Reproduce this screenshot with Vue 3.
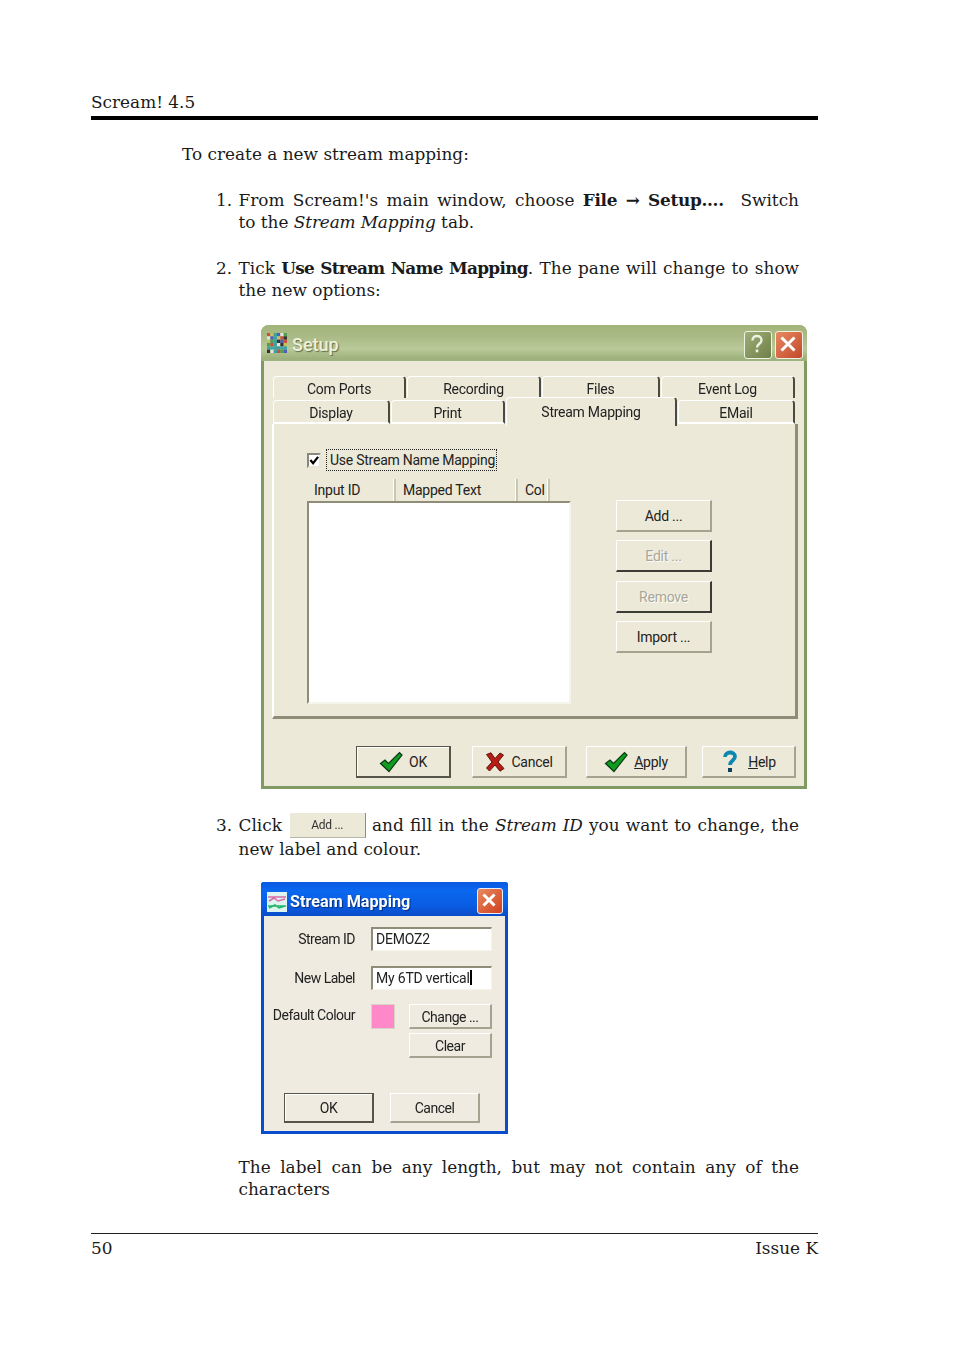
<script setup>
const row1 = [
  { label: 'Com Ports', w: 133 },
  { label: 'Recording', w: 134 },
  { label: 'Files', w: 118 },
  { label: 'Event Log', w: 134 }
]
const row2 = [
  { label: 'Display', w: 117 },
  { label: 'Print', w: 114 },
  { label: 'Stream Mapping', w: 171, active: true },
  { label: 'EMail', w: 117 }
]
const sideButtons = [
  { label: 'Add ...' },
  { label: 'Edit ...', off: true },
  { label: 'Remove', off: true },
  { label: 'Import ...' }
]
const cols = [
  { label: 'Input ID', w: 89 },
  { label: 'Mapped Text', w: 122 },
  { label: 'Col', w: 32 }
]
const mosaic = []
const palette = ['#c8503c', '#4f9e54', '#4c60b8', '#c8c060', '#333', '#e4e4dc', '#40a0a0']
for (let y = 0; y < 6; y++) for (let x = 0; x < 6; x++) mosaic.push({ x: x * 3, y: y * 3, c: palette[(x * 3 + y * 5 + x * y) % 7] })
</script>

<template>
  <div class="page">
    <header class="head">Scream! 4.5</header>
    <p class="intro">To create a new stream mapping:</p>

    <div class="item">
      <span class="num">1.</span>
      <div class="body">
        <span class="j">From Scream!'s main window, choose <b class="snug">File → Setup....</b> &nbsp;Switch</span>
        <span>to the <i>Stream Mapping</i> tab.</span>
      </div>
    </div>

    <div class="item">
      <span class="num">2.</span>
      <div class="body">
        <span class="j">Tick <b class="tight">Use Stream Name Mapping</b>. The pane will change to show</span>
        <span>the new options:</span>
      </div>
    </div>

    <section class="win">
      <div class="title">
        <svg class="appicon" width="20" height="20" viewBox="0 0 18 18">
          <rect v-for="(m, i) in mosaic" :key="i" :x="m.x" :y="m.y" width="3" height="3" :fill="m.c" />
        </svg>
        <span class="titletext">Setup</span>
        <span class="capbtn helpcap">
          <svg width="26" height="26" viewBox="0 0 26 26"><path d="M8.500 9.500c0-3 2-4.500 4.500-4.500s4.500 1.600 4.500 4.200c0 3.500-4.500 3.600-4.500 7.300" fill="none" stroke="#eef0e0" stroke-width="2.400"/><rect x="11.700" y="18.500" width="2.600" height="2.800" fill="#eef0e0"/></svg>
        </span>
        <span class="capbtn closecap">
          <svg width="26" height="26" viewBox="0 0 26 26"><path d="M6.500 6.500l13 13M19.500 6.500l-13 13" stroke="#fff" stroke-width="3" fill="none"/></svg>
        </span>
      </div>

      <div class="client">
        <div class="tabrow first">
          <div v-for="t in row1" :key="t.label" class="tab" :style="{ width: t.w + 'px' }">{{ t.label }}</div>
        </div>
        <div class="tabrow second">
          <div v-for="t in row2" :key="t.label" class="tab" :class="{ active: t.active }" :style="{ width: t.w + 'px' }">{{ t.label }}</div>
        </div>

        <div class="pane">
          <div class="checkrow">
            <span class="check">
              <svg width="11" height="11" viewBox="0 0 11 11"><path d="M1.500 5l3 3.500L10 1.500" fill="none" stroke="#000" stroke-width="2.400"/></svg>
            </span>
            <span class="focuslabel">Use Stream Name Mapping</span>
          </div>
          <div class="panecols">
            <div class="listwrap">
              <div class="listhead">
                <span v-for="c in cols" :key="c.label" class="lh" :style="{ width: c.w + 'px' }">{{ c.label }}</span>
              </div>
              <div class="list"></div>
            </div>
            <div class="sidebtns">
              <div v-for="b in sideButtons" :key="b.label" class="sidebtn" :class="{ off: b.off }">{{ b.label }}</div>
            </div>
          </div>
        </div>

        <div class="actions">
          <div class="act okb">
            <svg width="24" height="22" viewBox="0 0 24 22"><path d="M1.500 12.500l4.500-3.500 3.500 3.500L20.500 1.500l2.500 2.500L10 20.500z" fill="#0f9a20" stroke="#0a3a14" stroke-width="1.200"/></svg>
            <span>OK</span>
          </div>
          <div class="act cancelb">
            <svg width="20" height="20" viewBox="0 0 20 20"><path d="M1.500 2.500L6 .8l4 5.700 5-5.500 3.500 2-5.500 7 6 6.500-4 2.700-5-6.200-5.500 6-3-3 5.500-6z" fill="#b81c14" stroke="#5a1a14" stroke-width="1"/></svg>
            <span>Cancel</span>
          </div>
          <div class="act applyb">
            <svg width="24" height="22" viewBox="0 0 24 22"><path d="M1.500 12.500l4.500-3.500 3.500 3.500L20.500 1.500l2.500 2.500L10 20.500z" fill="#0f9a20" stroke="#0a3a14" stroke-width="1.200"/></svg>
            <span><u>A</u>pply</span>
          </div>
          <div class="act helpb">
            <svg width="18" height="24" viewBox="0 0 18 24"><path d="M4 7c0-3 2.500-4.500 5-4.500S14 4 14 6.500c0 4-5 4-5 8.500" fill="none" stroke="#0c88b0" stroke-width="3.800"/><rect x="7" y="18" width="4" height="4" fill="#10405c"/></svg>
            <span><u>H</u>elp</span>
          </div>
        </div>
      </div>
    </section>

    <div class="item third">
      <span class="num">3.</span>
      <div class="body">
        <span class="j">Click <span class="inlinebtn">Add ...</span> and fill in the <i>Stream ID</i> you want to change, the</span>
        <span>new label and colour.</span>
      </div>
    </div>

    <section class="dlg">
      <div class="dlgtitle">
        <svg width="20" height="20" viewBox="0 0 20 20">
          <rect width="20" height="20" fill="#dff4ee"/>
          <path d="M1 5h18M2 9l5-3 4 3 7-2" stroke="#d868a8" stroke-width="1.500" fill="none"/>
          <path d="M1 14h18M2 16l6-3 4 3 6-2" stroke="#20b868" stroke-width="1.500" fill="none"/>
        </svg>
        <span class="dlgtext">Stream Mapping</span>
        <span class="dlgclose">
          <svg width="24" height="24" viewBox="0 0 24 24"><path d="M6.500 6.500l11 11M17.500 6.500l-11 11" stroke="#fff" stroke-width="3" fill="none"/></svg>
        </span>
      </div>
      <div class="dlgbody">
        <div class="formrow">
          <span class="flabel">Stream ID</span>
          <span class="field">DEMOZ2</span>
        </div>
        <div class="formrow">
          <span class="flabel">New Label</span>
          <span class="field">My 6TD vertical<span class="caret"></span></span>
        </div>
        <div class="colourrow">
          <span class="flabel up">Default Colour</span>
          <span class="swatch"></span>
          <div class="colourbtns">
            <div class="sbtn">Change ...</div>
            <div class="sbtn">Clear</div>
          </div>
        </div>
        <div class="dlgactions">
          <div class="dbtn def">OK</div>
          <div class="dbtn">Cancel</div>
        </div>
      </div>
    </section>

    <div class="tail">
      <span class="j">The label can be any length, but may not contain any of the</span>
      <span>characters</span>
    </div>

    <footer class="foot">
      <span>50</span>
      <span>Issue K</span>
    </footer>
  </div>
</template>

<style>
html, body { background: #fff; }
</style>

<style scoped>
.page {
  box-sizing: border-box;
  width: 954px;
  height: 1351px;
  padding: 92px 136px 0 91px;
  font-family: "DejaVu Serif", serif;
  font-size: 16.900px;
  line-height: 22px;
  color: #1a1a1a;
  overflow: hidden;
}
.head {
  height: 20px;
  padding-bottom: 4px;
  line-height: 20px;
  border-bottom: 4px solid #000;
}
.intro { margin: 23px 0 0 91px; }
.item {
  display: flex;
  margin: 24px 0 0 125px;
  width: 583px;
}
.num { width: 22.500px; flex: none; }
.body { width: 560.500px; display: flex; flex-direction: column; }
.j { display: block; text-align: justify; text-align-last: justify; white-space: normal; }
b { font-weight: 700; }
i { letter-spacing: -0.15px; }
.tight { letter-spacing: -0.7px; }
.snug { letter-spacing: -0.3px; }

.win {
  box-sizing: border-box;
  width: 546px;
  height: 464px;
  margin: 24px 0 0 170px;
  background: #ece9d8;
  border: 3px solid #7f9a62;
  border-top: 0;
  border-radius: 8px 8px 0 0;
  font-family: "Roboto", "Liberation Sans", sans-serif;
  font-size: 14px;
  letter-spacing: -0.25px;
  line-height: 18px;
  color: #222;
  filter: blur(0.35px);
}
.title {
  display: flex;
  align-items: center;
  height: 36px;
  margin: 0 -3px;
  padding: 6px 4px 0 6px;
  gap: 5px;
  background: linear-gradient(#a3b47a 0, #a8b984 30%, #b9c999 70%, #9db07a 100%);
  border-radius: 8px 8px 0 0;
  border-bottom: 2px solid #9eb27e;
  box-sizing: border-box;
}
.appicon { flex: none; margin-top: -4px; }
.titletext {
  flex: 1;
  font-size: 18px;
  font-weight: 500;
  letter-spacing: 0;
  color: #eef0dc;
  text-shadow: 1px 1px 1px #5f6e46;
}
.capbtn {
  width: 26px;
  height: 26px;
  border: 1px solid #eef2e2;
  border-radius: 3px;
  display: block;
}
.capbtn svg { display: block; margin: -1px; }
.helpcap { background: linear-gradient(135deg, #9fae78, #6f7f48); }
.closecap { background: linear-gradient(135deg, #e88a60, #c2482a); margin-left: -2px; }

.client { padding: 15px 0 0 8px; }
.tabrow { display: flex; gap: 1px; margin-left: 1px; position: relative; }
.first { height: 22px; }
.second { height: 24px; margin-top: 2px; z-index: 1; }
.tab {
  box-sizing: border-box;
  background: #ece9d8;
  border-top: 1px solid #fff;
  border-left: 1px solid #fff;
  border-right: 2px solid #4a4a40;
  border-radius: 4px 4px 0 0;
  text-align: center;
  line-height: 24px;
}
.second .tab { border-bottom: 2px solid #fff; }
.second .tab.active {
  height: 29px;
  margin-top: -3px;
  border-bottom: 0;
  line-height: 28px;
  position: relative;
}
.pane {
  box-sizing: border-box;
  width: 526px;
  height: 295px;
  background: #ece9d8;
  border-left: 2px solid #fff;
  border-right: 3px solid #8f8d78;
  border-bottom: 3px solid #8f8d78;
  padding: 25px 0 0 33px;
}
.checkrow { display: flex; align-items: center; height: 22px; }
.check {
  box-sizing: border-box;
  width: 14px;
  height: 15px;
  background: #fff;
  border: 2px solid #8a887c;
  border-right-color: #e8e6da;
  border-bottom-color: #e8e6da;
  display: flex;
  align-items: center;
  justify-content: center;
}
.focuslabel {
  margin-left: 5px;
  padding: 0 1px 0 3px;
  border: 1px dotted #222;
  line-height: 21px;
  height: 20px;
  white-space: nowrap;
}
.panecols { display: flex; margin-top: 8px; }
.listwrap { width: 264px; flex: none; }
.listhead { display: flex; height: 22px; }
.lh {
  box-sizing: border-box;
  padding-left: 7px;
  border-right: 2px solid #c8c6b4;
  line-height: 23px;
  box-shadow: inset -1px 0 0 #fff;
  white-space: nowrap;
}
.list {
  box-sizing: border-box;
  height: 203px;
  background: #fff;
  border-top: 2px solid #8f8d78;
  border-left: 2px solid #8f8d78;
  border-right: 2px solid #f6f5ec;
  border-bottom: 2px solid #f6f5ec;
}
.sidebtns {
  display: flex;
  flex-direction: column;
  gap: 8.300px;
  margin: 21px 0 0 45px;
}
.sidebtn {
  box-sizing: border-box;
  width: 96px;
  height: 32px;
  text-align: center;
  line-height: 31px;
  border: 1px solid #fff;
  border-right: 2px solid #a5a390;
  border-bottom: 2px solid #a5a390;
}
.sidebtn.off {
  color: #a8a698;
  text-shadow: 1px 1px 0 #fff;
  border-right-color: #3c3c34;
  border-bottom-color: #3c3c34;
}
.actions { display: flex; margin-top: 27px; padding-left: 84px; }
.act {
  box-sizing: border-box;
  height: 32px;
  display: flex;
  align-items: center;
  justify-content: center;
  gap: 6px;
  padding-top: 1px;
  border: 1px solid #fff;
  border-right: 2px solid #a5a390;
  border-bottom: 2px solid #a5a390;
}
.okb {
  width: 95px;
  border: 1px solid #55554a;
  border-right-width: 2px;
  border-bottom-width: 2px;
  box-shadow: inset 1px 1px 0 #fff;
}
.cancelb { width: 95px; margin-left: 21px; }
.applyb { width: 101px; margin-left: 19px; }
.helpb { width: 94px; margin-left: 15px; }
.helpb svg { margin-right: 3px; }

.third { margin-top: 22px; align-items: flex-start; }
.third .num { margin-top: 3px; }
.third .j { height: 27px; line-height: 28px; }
.inlinebtn {
  display: inline-block;
  box-sizing: border-box;
  width: 76px;
  height: 25px;
  margin-left: 1.500px;
  background: #ece9d8;
  border-right: 1px solid #8f8d78;
  border-bottom: 1px solid #b8b6a4;
  font-family: "Roboto", "Liberation Sans", sans-serif;
  font-size: 12px;
  letter-spacing: -0.25px;
  line-height: 24px;
  text-align: center;
  vertical-align: 2px;
  text-align-last: center;
  color: #333;
  filter: blur(0.3px);
}

.dlg {
  box-sizing: border-box;
  width: 247px;
  height: 252px;
  margin: 22px 0 0 170px;
  background: #efebe0;
  border: 3px solid #0a4cd0;
  border-top: 0;
  border-radius: 3px 3px 0 0;
  font-family: "Roboto", "Liberation Sans", sans-serif;
  font-size: 14px;
  letter-spacing: -0.5px;
  line-height: 18px;
  color: #222;
  filter: blur(0.35px);
}
.dlgtitle {
  box-sizing: border-box;
  height: 34px;
  margin: 0 -3px;
  padding: 6px 6px 0 6px;
  display: flex;
  align-items: center;
  gap: 3px;
  background: linear-gradient(#0a58e0 0, #0a68f0 25%, #0a5ce4 70%, #0a4cc8 100%);
  border-radius: 3px 3px 0 0;
}
.dlgtext {
  flex: 1;
  color: #fff;
  font-weight: 700;
  font-size: 16.200px;
  letter-spacing: 0;
  text-shadow: 1px 1px 1px #06307a;
}
.dlgclose {
  width: 24px;
  height: 24px;
  margin-top: -2px;
  border: 1px solid #e8eefc;
  border-radius: 3px;
  background: linear-gradient(135deg, #e88a60, #d0401c);
  margin-right: -1px;
}
.dlgclose svg { display: block; margin: -1px; }
.dlgbody { padding: 11px 0 0 0; }
.formrow { display: flex; align-items: center; height: 24px; margin-bottom: 15px; }
.flabel { width: 91px; text-align: right; flex: none; margin-right: 16px; white-space: nowrap; }
.field {
  box-sizing: border-box;
  width: 121px;
  height: 24px;
  padding-left: 3px;
  background: #fff;
  border-top: 2px solid #8f8d78;
  border-left: 2px solid #8f8d78;
  border-right: 1px solid #f6f5ec;
  border-bottom: 1px solid #f6f5ec;
  line-height: 21px;
  letter-spacing: -0.2px;
  white-space: nowrap;
}
.caret { display: inline-block; width: 2px; height: 15px; background: #000; vertical-align: -2px; }
.colourrow { display: flex; align-items: flex-start; margin-top: -1px; }
.up { margin-top: 2px; }
.swatch {
  box-sizing: border-box;
  width: 24px;
  height: 25px;
  background: #ff88c8;
  border: 1px solid #d8d4c4;
  flex: none;
}
.colourbtns { display: flex; flex-direction: column; gap: 4px; margin-left: 14px; }
.sbtn {
  box-sizing: border-box;
  width: 83px;
  height: 25px;
  text-align: center;
  line-height: 25px;
  border: 1px solid #fff;
  border-right: 2px solid #a5a390;
  border-bottom: 2px solid #a5a390;
}
.dlgactions { display: flex; gap: 16px; margin: 35px 0 0 20px; }
.dbtn {
  box-sizing: border-box;
  width: 90px;
  height: 30px;
  text-align: center;
  line-height: 28px;
  border: 1px solid #fff;
  border-right: 2px solid #a5a390;
  border-bottom: 2px solid #a5a390;
}
.dbtn.def {
  border: 1px solid #55554a;
  border-right-width: 2px;
  border-bottom-width: 2px;
  box-shadow: inset 1px 1px 0 #fff;
}
.tail {
  margin: 22px 0 0 147.500px;
  width: 560.500px;
  display: flex;
  flex-direction: column;
}
.foot {
  display: flex;
  justify-content: space-between;
  margin-top: 33px;
  padding-top: 3px;
  border-top: 1.500px solid #222;
  line-height: 22px;
}
</style>
